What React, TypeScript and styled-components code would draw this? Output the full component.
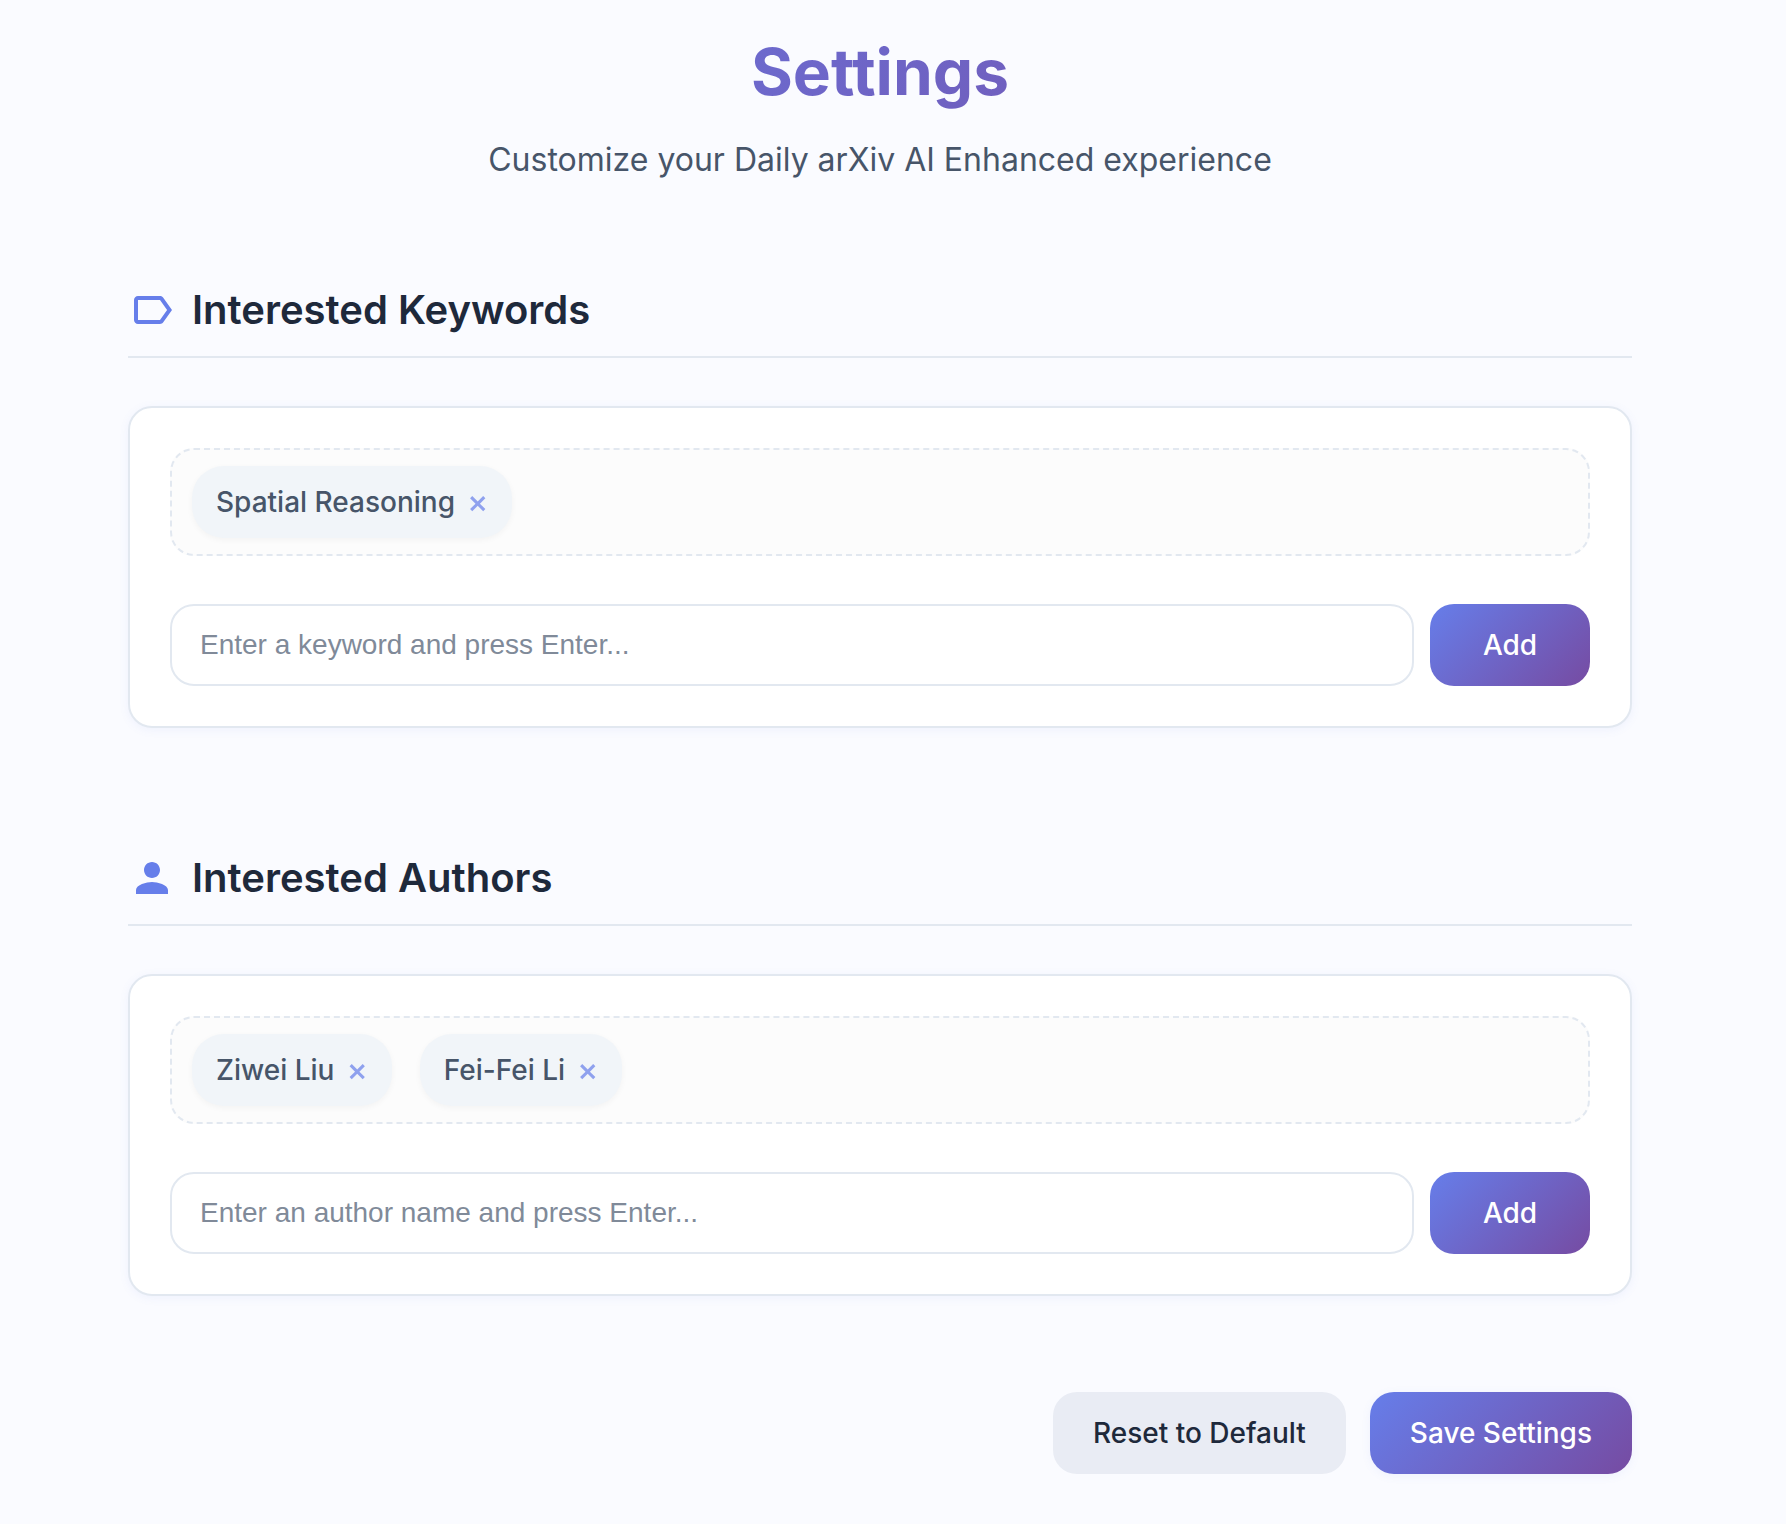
import React, { useState } from "react";
import styled, { createGlobalStyle, css } from "styled-components";

const GlobalStyle = createGlobalStyle`
  *, *::before, *::after { box-sizing: border-box; }
  body {
    margin: 0;
    background: #fafbff;
    color: #1e293b;
    font-family: Inter, "Liberation Sans", sans-serif;
    font-size: 28px;
  }
`;

const brandGradient = "linear-gradient(135deg, #667eea 0%, #764ba2 100%)";
const softShadow = "0 2px 10px rgba(102, 126, 234, 0.08)";

const Page = styled.main`
  padding: 32px 26px 48px 0;
`;

const Container = styled.div`
  max-width: 1600px;
  margin: 0 auto;
  padding: 0 48px;
`;

const Header = styled.header`
  margin-bottom: 100px;
  text-align: center;
`;

const Title = styled.h1`
  margin: 0 0 24px;
  font-size: 64px;
  line-height: 80px;
  font-weight: 700;
  color: transparent;
  background: ${brandGradient};
  background-clip: text;
  -webkit-background-clip: text;
`;

const Subtitle = styled.p`
  margin: 0;
  font-size: 32px;
  line-height: 48px;
  color: #475569;
`;

const Section = styled.section`
  & + & {
    margin-top: 124px;
  }
`;

const SectionHeader = styled.div`
  display: flex;
  align-items: center;
  gap: 16px;
  margin-bottom: 48px;
  padding-bottom: 20px;
  border-bottom: 2px solid #e2e8f0;
  color: #667eea;
`;

const SectionTitle = styled.h2`
  margin: 0;
  font-size: 40px;
  line-height: 52px;
  font-weight: 600;
  color: #1e293b;
`;

const Icon = styled.svg`
  flex: none;
  width: 48px;
  height: 48px;
  fill: currentColor;
`;

const Card = styled.div`
  padding: 40px;
  border: 2px solid #e2e8f0;
  border-radius: 24px;
  background: #fff;
  box-shadow: ${softShadow};
`;

const TagList = styled.ul`
  display: flex;
  flex-wrap: wrap;
  gap: 16px 28px;
  min-height: 108px;
  margin: 0 0 48px;
  padding: 16px 20px;
  border: 2px dashed #e2e8f0;
  border-radius: 24px;
  background: #fcfcfc;
  list-style: none;
`;

const Tag = styled.li`
  display: flex;
  align-items: center;
  gap: 12px;
  height: 72px;
  padding: 0 24px;
  border-radius: 32px;
  background: #f1f5f9;
  box-shadow: 0 2px 6px rgba(0, 0, 0, 0.04);
  color: #475569;
  font-weight: 500;
`;

const RemoveButton = styled.button`
  padding: 0;
  border: 0;
  background: none;
  color: #667eea;
  font: inherit;
  font-size: 32px;
  line-height: 32px;
  opacity: 0.7;
  cursor: pointer;
`;

const AddForm = styled.form`
  display: flex;
  gap: 16px;
`;

const TextInput = styled.input`
  flex: 1;
  min-width: 0;
  height: 82px;
  padding: 0 28px;
  border: 2px solid #e2e8f0;
  border-radius: 24px;
  background: #fff;
  color: #1e293b;
  font-family: "Liberation Sans", Arial, sans-serif;
  font-size: 28px;

  &::placeholder {
    color: #808a99;
    opacity: 1;
  }
`;

const Button = styled.button<{ $variant?: "primary" | "secondary"; $raised?: boolean }>`
  min-width: 160px;
  height: 82px;
  padding: 0 40px;
  border: 0;
  border-radius: 24px;
  font-family: inherit;
  font-size: 28px;
  font-weight: 500;
  cursor: pointer;
  ${({ $variant = "primary" }) =>
    $variant === "primary"
      ? css`
          background: ${brandGradient};
          color: #fff;
        `
      : css`
          background: #e9ecf4;
          color: #1e293b;
        `}
  ${({ $raised }) => $raised && `box-shadow: ${softShadow};`}
`;

const Actions = styled.div`
  display: flex;
  justify-content: flex-end;
  gap: 24px;
  margin-top: 96px;
`;

const LabelIcon = () => (
  <Icon viewBox="0 0 24 24" aria-hidden="true">
    <path d="M17.63 5.84C17.27 5.33 16.67 5 16 5L5 5.01C3.9 5.01 3 5.9 3 7v10c0 1.1.9 1.99 2 1.99L16 19c.67 0 1.27-.33 1.63-.84L22 12l-4.37-6.16zM16 17H5V7h11l3.55 5L16 17z" />
  </Icon>
);

const PersonIcon = () => (
  <Icon viewBox="0 0 24 24" aria-hidden="true">
    <path d="M12 12c2.21 0 4-1.79 4-4s-1.79-4-4-4-4 1.79-4 4 1.79 4 4 4zm0 2c-2.67 0-8 1.34-8 4v2h16v-2c0-2.66-5.33-4-8-4z" />
  </Icon>
);

interface TagSectionProps {
  title: string;
  icon: React.ReactNode;
  placeholder: string;
  tags: string[];
  onChange: (tags: string[]) => void;
}

function TagSection({ title, icon, placeholder, tags, onChange }: TagSectionProps) {
  const [draft, setDraft] = useState("");

  const add = (event: React.FormEvent) => {
    event.preventDefault();
    const value = draft.trim();
    if (value && !tags.includes(value)) onChange([...tags, value]);
    setDraft("");
  };

  return (
    <Section>
      <SectionHeader>
        {icon}
        <SectionTitle>{title}</SectionTitle>
      </SectionHeader>
      <Card>
        <TagList>
          {tags.map((tag) => (
            <Tag key={tag}>
              {tag}
              <RemoveButton
                type="button"
                aria-label={`Remove ${tag}`}
                onClick={() => onChange(tags.filter((t) => t !== tag))}
              >
                ×
              </RemoveButton>
            </Tag>
          ))}
        </TagList>
        <AddForm onSubmit={add}>
          <TextInput
            type="text"
            aria-label={title}
            placeholder={placeholder}
            value={draft}
            onChange={(event) => setDraft(event.target.value)}
          />
          <Button type="submit">Add</Button>
        </AddForm>
      </Card>
    </Section>
  );
}

const defaultKeywords = ["Spatial Reasoning"];
const defaultAuthors = ["Ziwei Liu", "Fei-Fei Li"];

export default function App() {
  const [keywords, setKeywords] = useState(defaultKeywords);
  const [authors, setAuthors] = useState(defaultAuthors);

  const reset = () => {
    setKeywords(defaultKeywords);
    setAuthors(defaultAuthors);
  };

  return (
    <>
      <GlobalStyle />
      <Page>
        <Container>
          <Header>
            <Title>Settings</Title>
            <Subtitle>Customize your Daily arXiv AI Enhanced experience</Subtitle>
          </Header>
          <TagSection
            title="Interested Keywords"
            icon={<LabelIcon />}
            placeholder="Enter a keyword and press Enter..."
            tags={keywords}
            onChange={setKeywords}
          />
          <TagSection
            title="Interested Authors"
            icon={<PersonIcon />}
            placeholder="Enter an author name and press Enter..."
            tags={authors}
            onChange={setAuthors}
          />
          <Actions>
            <Button type="button" $variant="secondary" onClick={reset}>
              Reset to Default
            </Button>
            <Button type="button" $raised>
              Save Settings
            </Button>
          </Actions>
        </Container>
      </Page>
    </>
  );
}
